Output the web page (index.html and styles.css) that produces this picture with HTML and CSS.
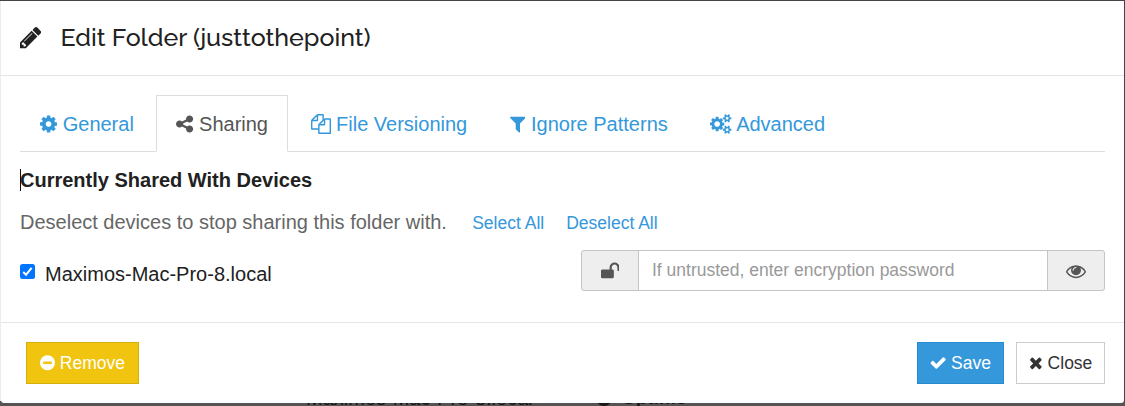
FILE: index.html
```html
<!DOCTYPE html>
<html lang="en">
<head>
<meta charset="utf-8">
<title>Edit Folder</title>
<link rel="stylesheet" href="styles.css">
</head>
<body>
<div class="backdrop"><span class="behind device">Maximos-Mac-Pro-8.local</span><span class="behind dot"></span><span class="behind peer">Uptime</span></div>
<div class="modal">
  <header class="modal-header">
    <svg class="icon" viewBox="128 0 1536 1792"><path d="M491 1536l91-91-235-235-91 91v107h128v128h107zm523-928q0-22-22-22-10 0-17 7l-542 542q-7 7-7 17 0 22 22 22 10 0 17-7l542-542q7-7 7-17zm-54-192l416 416-832 832h-416v-416zm683 96q0 53-37 90l-166 166-416-416 166-165q36-38 90-38 53 0 91 38l235 234q37 39 37 91z"/></svg>
    <h4 class="title">Edit Folder (justtothepoint)</h4>
  </header>
  <main class="modal-body">
    <nav class="tabs">
      <a class="tab"><svg class="icon" viewBox="128 0 1536 1792"><path d="M1152 896q0-106-75-181t-181-75-181 75-75 181 75 181 181 75 181-75 75-181zm512-109v222q0 12-8 23t-20 13l-185 28q-19 54-39 91 35 50 107 138 10 12 10 25t-9 23q-27 37-99 108t-94 71q-12 0-26-9l-138-108q-44 23-91 38-16 136-29 186-7 28-36 28h-222q-14 0-24.5-8.5t-11.5-21.5l-28-184q-49-16-90-37l-141 107q-10 9-25 9-14 0-25-11-126-114-165-168-7-10-7-23 0-12 8-23 15-21 51-66.5t54-70.5q-27-50-41-99l-183-27q-13-2-21-12.5t-8-23.5v-222q0-12 8-23t19-13l186-28q14-46 39-92-40-57-107-138-10-12-10-24 0-10 9-23 26-36 98.5-107.5t94.5-71.5q13 0 26 10l138 107q44-23 91-38 16-136 29-186 7-28 36-28h222q14 0 24.5 8.5t11.5 21.5l28 184q49 16 90 37l142-107q9-9 24-9 13 0 25 10 129 119 165 170 7 8 7 22 0 12-8 23-15 21-51 66.5t-54 70.5q26 50 41 98l183 28q13 2 21 12.5t8 23.5z"/></svg> General</a>
      <a class="tab active"><svg class="icon" viewBox="128 0 1536 1792"><path d="M1344 1024q133 0 226.5 93.5t93.5 226.5-93.5 226.5-226.5 93.5-226.5-93.5-93.5-226.5q0-12 2-34l-360-180q-92 86-218 86-133 0-226.5-93.5t-93.5-226.5 93.5-226.5 226.5-93.5q126 0 218 86l360-180q-2-22-2-34 0-133 93.5-226.5t226.5-93.5 226.5 93.5 93.5 226.5-93.5 226.5-226.5 93.5q-126 0-218-86l-360 180q2 22 2 34t-2 34l360 180q92-86 218-86z"/></svg> Sharing</a>
      <a class="tab"><svg class="icon" viewBox="0 0 1792 1792"><path d="M1696 384q40 0 68 28t28 68v1216q0 40-28 68t-68 28h-960q-40 0-68-28t-28-68v-288h-544q-40 0-68-28t-28-68v-672q0-40 20-88t48-76l408-408q28-28 76-48t88-20h416q40 0 68 28t28 68v328q68-40 128-40h416zm-544 213l-299 299h299v-299zm-640-384l-299 299h299v-299zm196 647l316-316v-416h-384v416q0 40-28 68t-68 28h-416v640h512v-256q0-40 20-88t48-76zm956 804v-1152h-384v416q0 40-28 68t-68 28h-416v640h896z"/></svg> File Versioning</a>
      <a class="tab"><svg class="icon" viewBox="192 0 1408 1792"><path d="M1595 295q17 41-14 70l-493 493v742q0 42-39 59-13 5-25 5-27 0-45-19l-256-256q-19-19-19-45v-486l-493-493q-31-29-14-70 17-39 59-39h1280q42 0 59 39z"/></svg> Ignore Patterns</a>
      <a class="tab"><svg class="icon" viewBox="0 0 1920 1792"><path d="M896 896q0-106-75-181t-181-75-181 75-75 181 75 181 181 75 181-75 75-181zm768 512q0-52-38-90t-90-38-90 38-38 90q0 53 37.5 90.5t90.5 37.5 90.5-37.5 37.5-90.5zm0-1024q0-52-38-90t-90-38-90 38-38 90q0 53 37.5 90.5t90.5 37.5 90.5-37.5 37.5-90.5zm-384 421v185q0 10-7 19.5t-16 10.5l-155 24q-11 35-32 76 34 48 90 115 7 11 7 20 0 12-7 19-23 30-82.5 89.5t-78.5 59.5q-11 0-21-7l-115-90q-37 19-77 31-11 108-23 155-7 24-30 24h-186q-11 0-20-7.5t-10-17.5l-23-153q-34-10-75-31l-118 89q-7 7-20 7-11 0-21-8-144-133-144-160 0-9 7-19 10-14 41-53t47-61q-23-44-35-82l-152-24q-10-1-17-9.5t-7-19.5v-185q0-10 7-19.5t16-10.5l155-24q11-35 32-76-34-48-90-115-7-11-7-20 0-12 7-20 22-30 82-89t79-59q11 0 21 7l115 90q34-18 77-32 11-108 23-154 7-24 30-24h186q11 0 20 7.5t10 17.5l23 153q34 10 75 31l118-89q8-7 20-7 11 0 21 8 144 133 144 160 0 8-7 19-12 16-42 54t-45 60q23 48 34 82l152 23q10 2 17 10.5t7 19.5zm640 533v140q0 16-149 31-12 27-30 52 51 113 51 138 0 4-4 7-122 71-124 71-8 0-46-47t-52-68q-20 2-30 2t-30-2q-14 21-52 68t-46 47q-2 0-124-71-4-3-4-7 0-25 51-138-18-25-30-52-149-15-149-31v-140q0-16 149-31 13-29 30-52-51-113-51-138 0-4 4-7 4-2 35-20t59-34 30-16q8 0 46 46.5t52 67.5q20-2 30-2t30 2q51-71 92-112l6-2q4 0 124 70 4 3 4 7 0 25-51 138 17 23 30 52 149 15 149 31zm0-1024v140q0 16-149 31-12 27-30 52 51 113 51 138 0 4-4 7-122 71-124 71-8 0-46-47t-52-68q-20 2-30 2t-30-2q-14 21-52 68t-46 47q-2 0-124-71-4-3-4-7 0-25 51-138-18-25-30-52-149-15-149-31v-140q0-16 149-31 13-29 30-52-51-113-51-138 0-4 4-7 4-2 35-20t59-34 30-16q8 0 46 46.5t52 67.5q20-2 30-2t30 2q51-71 92-112l6-2q4 0 124 70 4 3 4 7 0 25-51 138 17 23 30 52 149 15 149 31z"/></svg> Advanced</a>
    </nav>
    <div class="section-title"><span class="caret"></span>Currently Shared With Devices</div>
    <div class="help"><span>Deselect devices to stop sharing this folder with.</span><a class="link">Select All</a><a class="link">Deselect All</a></div>
    <div class="device-row">
      <label class="device-label"><span class="checkbox"><svg viewBox="0 0 15 15"><path d="M3.2 8.1L6 10.8L11.6 3.8" fill="none" stroke="#fff" stroke-width="2.1"/></svg></span><span>Maximos-Mac-Pro-8.local</span></label>
      <div class="input-group">
        <span class="addon"><svg class="icon" viewBox="64 0 1664 1792"><path d="M1728 576v256q0 26-19 45t-45 19h-64q-26 0-45-19t-19-45v-256q0-106-75-181t-181-75-181 75-75 181v192h96q40 0 68 28t28 68v576q0 40-28 68t-68 28h-960q-40 0-68-28t-28-68v-576q0-40 28-68t68-28h672v-192q0-185 131.5-316.5t316.5-131.5 316.5 131.5 131.5 316.5z"/></svg></span>
        <input class="password" type="text" placeholder="If untrusted, enter encryption password">
        <span class="addon"><svg class="icon" viewBox="0 0 1792 1792"><path d="M1664 960q-152-236-381-353 61 104 61 225 0 185-131.5 316.5t-316.5 131.5-316.5-131.5-131.5-316.5q0-121 61-225-229 117-381 353 133 205 333.5 326.5t434.5 121.5 434.5-121.5 333.5-326.5zm-720-384q0-20-14-34t-34-14q-125 0-214.5 89.5t-89.5 214.5q0 20 14 34t34 14 34-14 14-34q0-86 61-147t147-61q20 0 34-14t14-34zm848 384q0 34-20 69-140 230-376.5 368.5t-499.5 138.5-499.5-139-376.5-368q-20-35-20-69t20-69q140-229 376.5-368t499.5-139 499.5 139 376.5 368q20 35 20 69z"/></svg></span>
      </div>
    </div>
  </main>
  <footer class="modal-footer">
    <button class="btn warning"><svg class="icon" viewBox="128 0 1536 1792"><path d="M1344 960v-128q0-26-19-45t-45-19h-768q-26 0-45 19t-19 45v128q0 26 19 45t45 19h768q26 0 45-19t19-45zm320-64q0 209-103 385.5t-279.5 279.5-385.5 103-385.5-103-279.5-279.5-103-385.5 103-385.5 279.5-279.5 385.5-103 385.5 103 279.5 279.5 103 385.5z"/></svg> Remove</button>
    <button class="btn primary"><svg class="icon" viewBox="64 0 1664 1792"><path d="M1671 566q0 40-28 68l-724 724-136 136q-28 28-68 28t-68-28l-136-136-362-362q-28-28-28-68t28-68l136-136q28-28 68-28t68 28l294 295 656-657q28-28 68-28t68 28l136 136q28 28 28 68z"/></svg> Save</button>
    <button class="btn default"><svg class="icon" viewBox="192 0 1408 1792"><path d="M1490 1322q0 40-28 68l-136 136q-28 28-68 28t-68-28l-294-294-294 294q-28 28-68 28t-68-28l-136-136q-28-28-28-68t28-68l294-294-294-294q-28-28-28-68t28-68l136-136q28-28 68-28t68 28l294 294 294-294q28-28 68-28t68 28l136 136q28 28 28 68t-28 68l-294 294 294 294q28 28 28 68z"/></svg> Close</button>
  </footer>
</div>
</body>
</html>
```
FILE: styles.css
```css
* { box-sizing: border-box; }
html { height: 100%; overflow: hidden; }
body {
  position: relative;
  margin: 0;
  height: 406px;
  padding: 1px 1px 3px;
  overflow: hidden;
  background: linear-gradient(90deg, #ececec 1px, transparent 1px) 0 1px / 100% 400px no-repeat, linear-gradient(#454345 402px, #555354 402px);
  color: #212121;
  font: 20px/28px "Liberation Sans", Arial, sans-serif;
}
.backdrop { position: absolute; inset: 0; overflow: hidden; color: #171717; }
.behind { position: absolute; line-height: 20px; }
.device { left: 306px; top: 388px; }
.dot { left: 596px; top: 390px; width: 16px; height: 16px; border: 3px solid #171717; border-radius: 50%; }
.peer { left: 622px; top: 388px; font-weight: bold; font-size: 19px; }
.icon { height: 1em; fill: currentColor; vertical-align: -0.143em; }
.modal {
  position: relative;
  display: flex;
  flex-direction: column;
  height: 402px;
  background: #fff;
  border-radius: 0 0 3px 3px;
}
.modal-header {
  display: flex;
  align-items: center;
  gap: 19px;
  height: 75px;
  padding: 0 19px 2px;
  border-bottom: 1px solid #e5e5e5;
  font-size: 25px;
}
.title { margin: 0; font: 500 25px/28px Raleway, Lato, sans-serif; letter-spacing: 0; }
.modal-body { height: 246px; padding: 19px 19px 0; }
.tabs { display: flex; gap: 2.5px; height: 57px; border-bottom: 1px solid #ddd; }
.tab { height: 57px; padding: 14px 19px 0; border: 1px solid transparent; color: #3498db; white-space: nowrap; }
.tab.active { border-color: #ddd #ddd #fff; background: #fff; color: #555; }
.section-title { position: relative; margin-top: 14px; font-weight: bold; }
.caret { position: absolute; left: 0; top: 3px; width: 1px; height: 22px; background: #111; }
.help { display: flex; align-items: baseline; margin-top: 14px; color: #666; }
.link { margin-left: 22px; color: #3498db; font-size: 17.5px; }
.help span + .link { margin-left: 25.3px; }
.device-row { display: flex; justify-content: space-between; margin-top: 13px; }
.device-label { display: flex; gap: 10px; padding-top: 10px; }
.checkbox { width: 15px; height: 15px; margin-top: 4px; border-radius: 2.5px; background: #0075ff; }
.checkbox svg { display: block; }
.input-group { display: flex; width: 524px; height: 41px; border: 1px solid #c4c4c4; border-radius: 3px; background: #eee; overflow: hidden; }
.addon { display: flex; flex: 0 0 56px; align-items: center; justify-content: center; color: #555; }
.addon .icon { height: 20px; }
.password {
  flex: 1;
  min-width: 0;
  padding: 0 13px;
  border: solid #c4c4c4;
  border-width: 0 1px;
  border-radius: 0;
  outline: 0;
  background: #fff;
  font: 17.5px "Liberation Sans", Arial, sans-serif;
}
.password::placeholder { color: #999; opacity: 1; }
.modal-footer { display: flex; gap: 12px; padding: 19px 19px 0 25px; border-top: 1px solid #e5e5e5; }
.btn { height: 42px; padding: 0 12px; border: 1px solid; border-radius: 0; font: 17.5px/24px "Liberation Sans", Arial, sans-serif; white-space: nowrap; }
.warning { width: 113px; margin-right: auto; border-color: #d4b00d; background: #f1c40f; color: #fff; }
.primary { width: 87px; border-color: #258cd1; background: #3498db; color: #fff; }
.default { width: 89px; border-color: #ccc; background: #fff; color: #333; }
```
